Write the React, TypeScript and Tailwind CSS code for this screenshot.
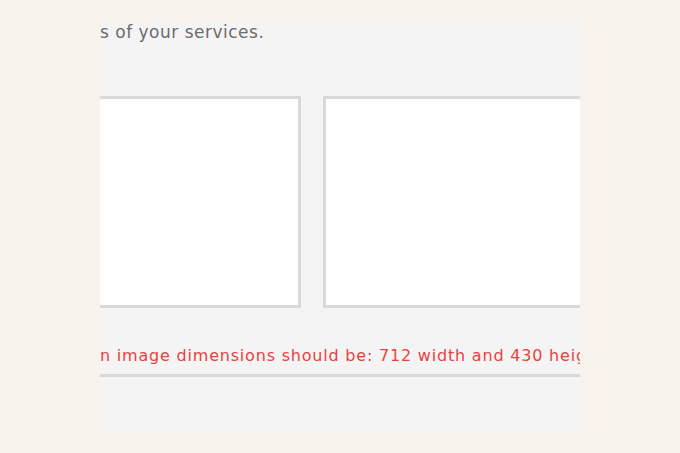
export default function App() {
  return (
    <div className="w-[680px] h-[453px] bg-[#f7f3ec] pt-[22px] pl-[100px]" style={{ fontFamily: '"DejaVu Sans", Verdana, sans-serif' }}>
      <div className="w-[480px] h-[409px] bg-[#f4f4f4] overflow-hidden flex flex-col">
        <div className="text-[17px] leading-[20px] tracking-[0.5px] text-[#6c6c6c] mt-[0px] whitespace-nowrap">s of your services.</div>
        <div className="flex gap-[22px] ml-[-79px] mt-[54px]">
          <div className="w-[280px] h-[212px] shrink-0 bg-white border-[3px] border-[#d9d9d9]" />
          <div className="w-[280px] h-[212px] shrink-0 bg-white border-[3px] border-[#d9d9d9]" />
        </div>
        <div className="mt-[38px] text-[16px] leading-[20px] tracking-[0.8px] text-[#e8423f] whitespace-nowrap">n image dimensions should be: 712 width and 430 height</div>
        <div className="mt-[8px] h-[3px] bg-[#d9d9d9]" />
      </div>
    </div>
  );
}
